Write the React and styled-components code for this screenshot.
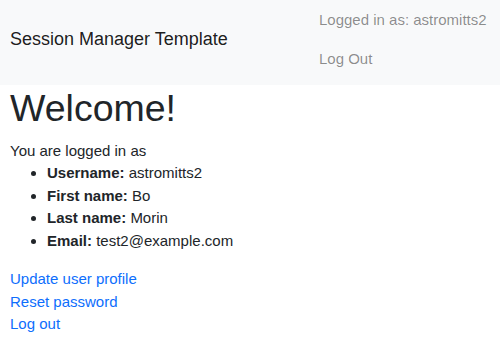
import React from "react";
import styled, { createGlobalStyle } from "styled-components";

const GlobalStyle = createGlobalStyle`
  body {
    margin: 0;
    background: #fff;
    color: #212529;
    font-family: "Liberation Sans", Arial, sans-serif;
    font-size: 15px;
    line-height: 22.5px;
  }
`;

const user = {
  username: "astromitts2",
  firstName: "Bo",
  lastName: "Morin",
  email: "test2@example.com",
};

const App = () => {
  return (
    <>
      <GlobalStyle />
      <StyledNavbar>
        <StyledBrand href="#">Session Manager Template</StyledBrand>
        <StyledNav>
          <StyledNavLink href="#">Logged in as: {user.username}</StyledNavLink>
          <StyledNavLink href="#">Log Out</StyledNavLink>
        </StyledNav>
      </StyledNavbar>
      <StyledMain>
        <StyledH1>Welcome!</StyledH1>
        <StyledP>You are logged in as</StyledP>
        <StyledList>
          <li>
            <b>Username:</b> {user.username}
          </li>
          <li>
            <b>First name:</b> {user.firstName}
          </li>
          <li>
            <b>Last name:</b> {user.lastName}
          </li>
          <li>
            <b>Email:</b> {user.email}
          </li>
        </StyledList>
        <StyledLinks>
          <StyledLink href="#">Update user profile</StyledLink>
          <StyledLink href="#">Reset password</StyledLink>
          <StyledLink href="#">Log out</StyledLink>
        </StyledLinks>
      </StyledMain>
    </>
  );
};

export default App;

const StyledNavbar = styled.nav`
  display: flex;
  justify-content: space-between;
  align-items: flex-start;
  height: 85px;
  box-sizing: border-box;
  padding: 1px 8px 0 10px;
  background: #f8f9fa;
`;

const StyledBrand = styled.a`
  padding-top: 24px;
  font-size: 18px;
  line-height: 28px;
  color: rgba(0, 0, 0, 0.9);
  text-decoration: none;
`;

const StyledNav = styled.div`
  display: flex;
  flex-direction: column;
  width: 173px;
`;

const StyledNavLink = styled.a`
  padding: 8.25px 0;
  color: rgba(0, 0, 0, 0.45);
  text-decoration: none;
  white-space: nowrap;
`;

const StyledMain = styled.main`
  padding: 1px 10px 0;
`;

const StyledH1 = styled.h1`
  margin: 0 0 7.5px;
  font-size: 37.5px;
  font-weight: 500;
  line-height: 45px;
`;

const StyledP = styled.p`
  margin: 0;
  padding-top: 1px;
`;

const StyledList = styled.ul`
  margin: 0 0 16px;
  padding-left: 37px;

  b {
    font-weight: 700;
  }
`;

const StyledLinks = styled.div`
  display: flex;
  flex-direction: column;
  align-items: flex-start;
`;

const StyledLink = styled.a`
  color: #0d6efd;
  text-decoration: none;
`;
